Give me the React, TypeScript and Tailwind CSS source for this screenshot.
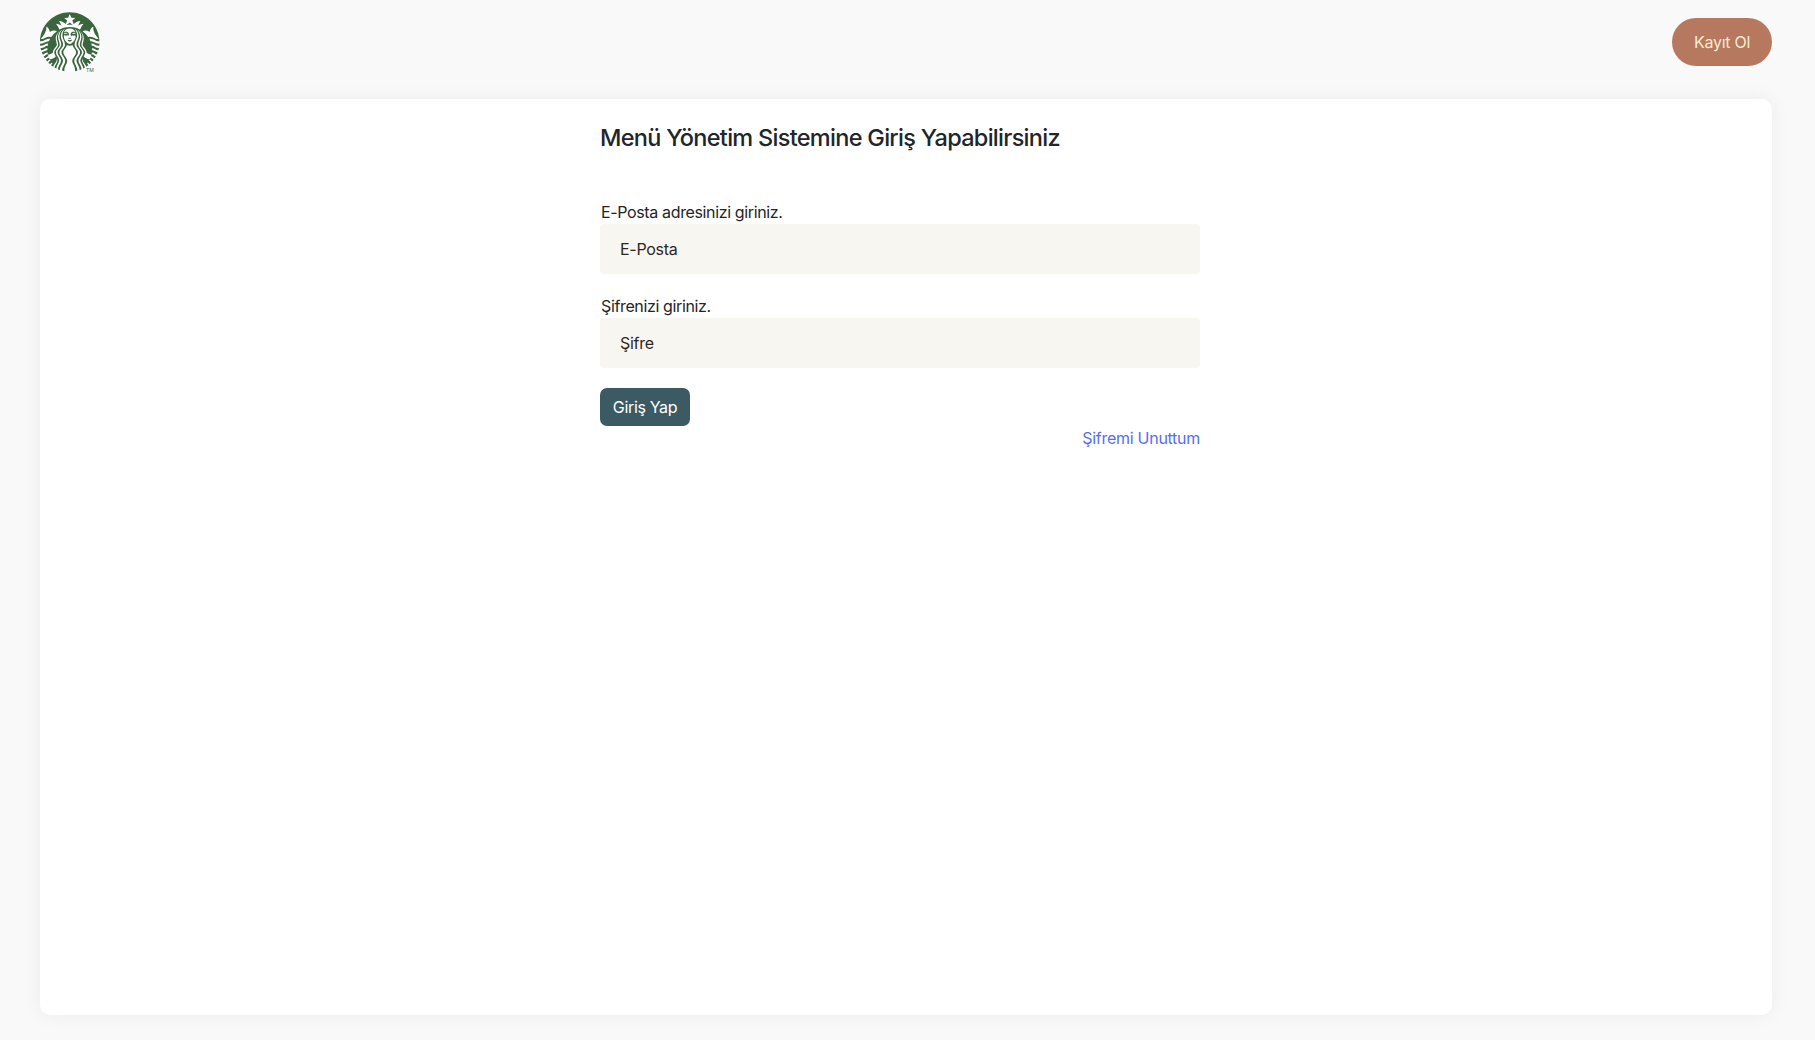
import type { ReactNode } from "react";
import { SiStarbucks } from "react-icons/si";

function Logo() {
  return (
    <a href="#" aria-label="Starbucks" className="relative block size-[59.5px] rounded-full bg-white">
      <SiStarbucks className="size-[59.5px] text-[#3a663e]" />
      <span className="absolute left-[46px] top-[55px] text-[5px] leading-[6px] text-[#3a663e]">TM</span>
    </a>
  );
}

function Field({ label, placeholder, type }: { label: ReactNode; placeholder: string; type: string }) {
  return (
    <label className="mb-5 block">
      <span className="block h-6 pl-px tracking-[-0.36px]">{label}</span>
      <input
        type={type}
        placeholder={placeholder}
        className="block h-[50px] w-full rounded-[4px] bg-[#f7f6f1] px-5 tracking-[-0.28px] outline-none placeholder:text-[#30261c]"
      />
    </label>
  );
}

export default function App() {
  return (
    <div className="flex h-[1040px] flex-col bg-[#f9f9f9] pl-10 pr-[43px] font-['Inter',sans-serif] text-base text-[#212529]">
      <header className="flex h-[99px] shrink-0 items-start justify-between pt-3">
        <Logo />
        <button className="mt-1.5 h-12 w-[100px] rounded-full bg-[#b6795f] tracking-[-0.28px] text-[#f6ebd3]">
          Kayıt Ol
        </button>
      </header>
      <main className="h-[916px] rounded-[10px] bg-white pl-[560px] pt-6 shadow-[0_0_20px_rgba(0,0,0,0.06)]">
        <form className="w-[600px]">
          <h1 className="mb-[48px] h-[29px] whitespace-nowrap text-[23.5px] leading-[29px] font-medium tracking-[-0.71px]">
            Menü Yönetim Sistemine Giriş Yapabilirsiniz
          </h1>
          <Field label="E-Posta adresinizi giriniz." placeholder="E-Posta" type="email" />
          <Field label="Şifrenizi giriniz." placeholder="Şifre" type="password" />
          <button type="button" className="block h-[38px] w-[90px] rounded-[7px] bg-[#3c5a64] tracking-[-0.35px] text-white">
            Giriş Yap
          </button>
          <a href="#" className="block text-right tracking-[-0.28px] text-[#566ef0]">
            Şifremi Unuttum
          </a>
        </form>
      </main>
    </div>
  );
}
